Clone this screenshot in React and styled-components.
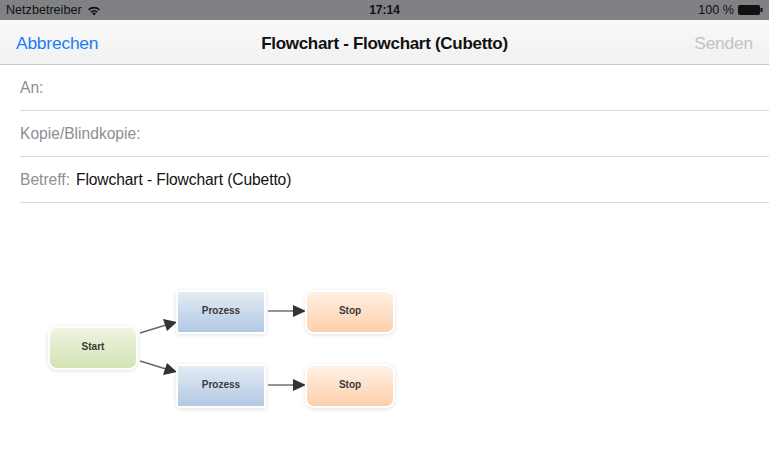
import React from "react";
import styled, { createGlobalStyle } from "styled-components";

const Global = createGlobalStyle`
  html, body { margin: 0; padding: 0; background: #fff; }
  body { font-family: "Liberation Sans", Arial, sans-serif; }
`;

const Screen = styled.div`
  width: 769px;
  height: 457px;
  overflow: hidden;
  display: flex;
  flex-direction: column;
  background: #fff;
`;

const StatusBar = styled.div`
  height: 20px;
  background: #808184;
  display: flex;
  align-items: center;
  padding: 0 6px 0 6px;
  font-size: 12.6px;
  color: #111;
  position: relative;
`;

const Carrier = styled.div`
  display: flex;
  align-items: center;
  gap: 5px;
  flex: 1;
`;

const Clock = styled.div`
  position: absolute;
  left: 0;
  right: 0;
  text-align: center;
  font-weight: bold;
  font-size: 12px;
  pointer-events: none;
`;

const Battery = styled.div`
  display: flex;
  align-items: center;
  gap: 4px;
`;

const NavBar = styled.div`
  height: 45px;
  box-sizing: border-box;
  padding: 3px 16px 0;
  background: linear-gradient(#f9f9f9, #f1f1f1);
  border-bottom: 1px solid #c9c9cb;
  display: flex;
  align-items: center;
  justify-content: space-between;
  font-size: 17.4px;
  position: relative;
`;

const NavButton = styled.span`
  color: ${(p) => (p.disabled ? "#c3c3c5" : "#1a7cf8")};
  letter-spacing: -0.2px;
`;

const Title = styled.span`
  position: absolute;
  left: 0;
  right: 0;
  text-align: center;
  font-weight: bold;
  font-size: 17px;
  color: #111;
  letter-spacing: -0.3px;
  pointer-events: none;
`;

const Fields = styled.div`
  padding-left: 20px;
`;

const Field = styled.div`
  height: 45px;
  border-bottom: 1px solid #d9d9db;
  display: flex;
  align-items: center;
  gap: 6px;
  font-size: 15.6px;
`;

const Label = styled.span`
  color: #8e8e93;
`;

const Value = styled.span`
  color: #111;
  letter-spacing: -0.1px;
`;

const Canvas = styled.div`
  position: relative;
  flex: 1;
`;

const Node = styled.div`
  position: absolute;
  left: ${(p) => p.x}px;
  top: ${(p) => p.y}px;
  width: 86px;
  height: 40px;
  box-sizing: border-box;
  padding-bottom: 3px;
  display: flex;
  align-items: center;
  justify-content: center;
  font-size: 10px;
  font-weight: bold;
  color: #3a3a3a;
  border-radius: ${(p) => (p.round ? 7 : 1)}px;
  background: ${(p) => p.bg};
  box-shadow: 0 0 0 2px #fff, 0 1px 4px 2px rgba(0, 0, 0, 0.12);
`;

const Arrows = styled.svg`
  position: absolute;
  left: 0;
  top: 0;
`;

const green = "linear-gradient(#eef4e2, #d2e3b3)";
const blue = "linear-gradient(#e4ebf4, #b1c8e3)";
const orange = "linear-gradient(#fff1e5, #fdcfaa)";

export default function App() {
  // canvas starts at y=203
  const oy = 203;
  return (
    <Screen>
      <Global />
      <StatusBar>
        <Carrier>
          Netzbetreiber
          <svg width="14" height="11" viewBox="0 0 14 11">
            <path d="M7 10.5 L5 8.3 A3 3 0 0 1 9 8.3 Z" fill="#111" />
            <path d="M3.3 6.6 A5.3 5.3 0 0 1 10.7 6.6 L9.6 7.7 A3.8 3.8 0 0 0 4.4 7.7 Z" fill="#111" />
            <path d="M1 4.2 A8.5 8.5 0 0 1 13 4.2 L11.9 5.4 A7 7 0 0 0 2.1 5.4 Z" fill="#111" />
          </svg>
        </Carrier>
        <Clock>17:14</Clock>
        <Battery>
          100 %
          <svg width="25" height="10" viewBox="0 0 25 10">
            <rect x="0.5" y="0.5" width="21" height="9" rx="1" fill="#111" stroke="#111" />
            <rect x="22.5" y="3" width="2" height="4" fill="#111" />
          </svg>
        </Battery>
      </StatusBar>
      <NavBar>
        <NavButton>Abbrechen</NavButton>
        <Title>Flowchart - Flowchart (Cubetto)</Title>
        <NavButton disabled>Senden</NavButton>
      </NavBar>
      <Fields>
        <Field>
          <Label>An:</Label>
        </Field>
        <Field>
          <Label>Kopie/Blindkopie:</Label>
        </Field>
        <Field>
          <Label>Betreff:</Label>
          <Value>Flowchart - Flowchart (Cubetto)</Value>
        </Field>
      </Fields>
      <Canvas>
        <Arrows width="769" height="255" viewBox="0 0 769 255">
          <g stroke="#666" strokeWidth="1.4" fill="none">
            <line x1="140" y1={333 - oy} x2="166" y2={325 - oy} />
            <line x1="140" y1={361 - oy} x2="166" y2={369 - oy} />
            <line x1="268" y1={311 - oy} x2="294" y2={311 - oy} />
            <line x1="268" y1={385 - oy} x2="294" y2={385 - oy} />
          </g>
          <g fill="#333">
            <polygon points={`177,${322 - oy} 163,${319 - oy} 167,${331 - oy}`} />
            <polygon points={`177,${372 - oy} 167,${363 - oy} 163,${375 - oy}`} />
            <polygon points={`306,${311 - oy} 293,${305 - oy} 293,${317 - oy}`} />
            <polygon points={`306,${385 - oy} 293,${379 - oy} 293,${391 - oy}`} />
          </g>
        </Arrows>
        <Node x={50} y={328 - oy} round bg={green}>Start</Node>
        <Node x={178} y={292 - oy} bg={blue}>Prozess</Node>
        <Node x={178} y={366 - oy} bg={blue}>Prozess</Node>
        <Node x={307} y={292 - oy} round bg={orange}>Stop</Node>
        <Node x={307} y={366 - oy} round bg={orange}>Stop</Node>
      </Canvas>
    </Screen>
  );
}
